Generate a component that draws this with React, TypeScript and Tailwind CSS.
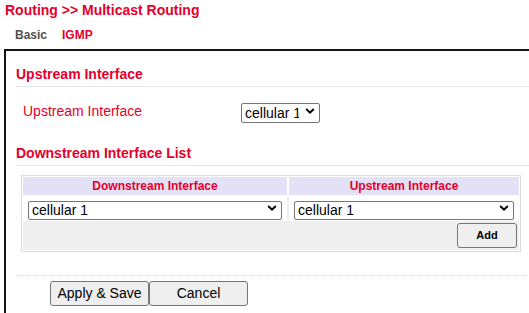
import type { ReactNode } from 'react'

const RED = 'text-[#e4002b]'

function Chevron() {
  return (
    <svg width="10" height="7" viewBox="0 0 10 7" className="pointer-events-none absolute right-[5px] top-1/2 -translate-y-1/2">
      <polyline points="1.2,1.5 5,5.2 8.8,1.5" fill="none" stroke="#000" strokeWidth="2" />
    </svg>
  )
}

function Select({ className = '' }: { className?: string }) {
  return (
    <div className={`relative ${className}`}>
      <select
        defaultValue="cellular 1"
        className="h-full w-full appearance-none rounded-[2px] border border-[#767676] bg-white pl-[3px] pr-[20px] text-[14px] leading-[16px] text-black outline-none"
      >
        <option>cellular 1</option>
        <option>cellular 2</option>
      </select>
      <Chevron />
    </div>
  )
}

function Heading({ children, className = '' }: { children: ReactNode; className?: string }) {
  return (
    <div className={`ml-[10px] border-b border-[#e6e6e6] pb-[4px] text-[14px] font-bold leading-[16px] ${RED} ${className}`}>
      {children}
    </div>
  )
}

function Btn({ children, className = '' }: { children: ReactNode; className?: string }) {
  return (
    <button
      type="button"
      className={`rounded-[3px] border border-[#767676] bg-[#efefef] text-black ${className}`}
    >
      {children}
    </button>
  )
}

export default function App() {
  return (
    <div className="h-[313px] w-[529px] overflow-hidden bg-white font-['Liberation_Sans',Arial,sans-serif]">
      <div className={`mt-[2px] h-[16px] pl-[5px] text-[14px] font-bold leading-[16px] ${RED}`}>
        Routing &gt;&gt; Multicast Routing
      </div>

      <div className="mt-[10px] flex h-[14px] pl-[15px] text-[12px] font-bold leading-[14px]">
        <span className="text-[#505050]">Basic</span>
        <span className={`ml-[15px] ${RED}`}>IGMP</span>
      </div>

      <div className="ml-[4px] mt-[7px] h-[300px] w-[560px] border-l-2 border-t-2 border-[#161616]">
        <Heading className="mt-[15px]">Upstream Interface</Heading>

        <div className="mt-[14px] flex h-[20px] items-center pl-[17px]">
          <span className={`w-[218px] text-[14px] leading-[16px] ${RED}`}>Upstream Interface</span>
          <Select className="h-[20px] w-[79px]" />
        </div>

        <Heading className="mt-[24px]">Downstream Interface List</Heading>

        <div className="ml-[15px] mt-[9px] w-[500px] border border-[#dcdcdc] bg-white p-[1px]">
          <div className="grid grid-cols-[264px_1fr] gap-[2px]">
            <div className={`h-[18px] bg-[#e4e1f6] text-center text-[12px] font-bold leading-[18px] ${RED}`}>
              Downstream Interface
            </div>
            <div className={`h-[18px] bg-[#e4e1f6] text-center text-[12px] font-bold leading-[18px] ${RED}`}>
              Upstream Interface
            </div>
          </div>
          <div className="mt-[1px] grid h-[24px] grid-cols-[264px_1fr] gap-[2px] bg-[#f0f0f0]">
            <div className="bg-white px-[5px] pt-[2px]">
              <Select className="h-[19px] w-full" />
            </div>
            <div className="bg-white pl-[5px] pr-[5px] pt-[2px]">
              <Select className="h-[19px] w-full" />
            </div>
          </div>
          <div className="mt-[1px] flex h-[29px] justify-end bg-[#efefef] pr-[2px] pt-[2px]">
            <Btn className="h-[25px] w-[60px] text-[11px] font-bold">Add</Btn>
          </div>
        </div>

        <div className="ml-[10px] mt-[23px] border-t border-dotted border-[#d8d8d8]" />

        <div className="ml-[44px] mt-[5px] flex">
          <Btn className="h-[25px] w-[99px] text-[14px]">Apply &amp; Save</Btn>
          <Btn className="h-[25px] w-[99px] text-[14px]">Cancel</Btn>
        </div>
      </div>
    </div>
  )
}
